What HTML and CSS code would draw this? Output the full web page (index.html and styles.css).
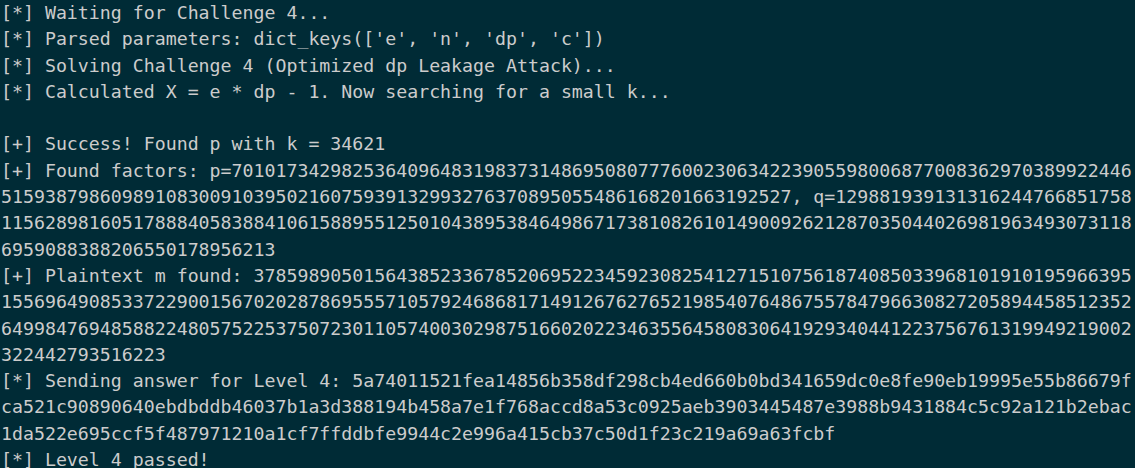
FILE: index.html
```html
<!DOCTYPE html>
<html lang="en">
<head>
<meta charset="utf-8">
<title>Terminal</title>
<link rel="stylesheet" href="styles.css">
</head>
<body>
<main class="terminal">
<div class="line">[*] Waiting for Challenge 4...</div>
<div class="line">[*] Parsed parameters: dict_keys(['e', 'n', 'dp', 'c'])</div>
<div class="line">[*] Solving Challenge 4 (Optimized dp Leakage Attack)...</div>
<div class="line">[*] Calculated X = e * dp - 1. Now searching for a small k...</div>
<div class="line"> </div>
<div class="line">[+] Success! Found p with k = 34621</div>
<div class="line">[+] Found factors: p=7010173429825364096483198373148695080777600230634223905598006877008362970389922446</div>
<div class="line">515938798609891083009103950216075939132993276370895055486168201663192527, q=129881939131316244766851758</div>
<div class="line">1156289816051788840583884106158895512501043895384649867173810826101490092621287035044026981963493073118</div>
<div class="line">6959088388206550178956213</div>
<div class="line">[+] Plaintext m found: 37859890501564385233678520695223459230825412715107561874085033968101910195966395</div>
<div class="line">1556964908533722900156702028786955571057924686817149126762765219854076486755784796630827205894458512352</div>
<div class="line">6499847694858822480575225375072301105740030298751660202234635564580830641929340441223756761319949219002</div>
<div class="line">322442793516223</div>
<div class="line">[*] Sending answer for Level 4: 5a74011521fea14856b358df298cb4ed660b0bd341659dc0e8fe90eb19995e55b86679f</div>
<div class="line">ca521c90890640ebdbddb46037b1a3d388194b458a7e1f768accd8a53c0925aeb3903445487e3988b9431884c5c92a121b2ebac</div>
<div class="line">1da522e695ccf5f487971210a1cf7ffddbfe9944c2e996a415cb37c50d1f23c219a69a63fcbf</div>
<div class="line">[*] Level 4 passed!</div>
</main>
</body>
</html>
```
FILE: styles.css
```css
html, body {
  margin: 0;
  padding: 0;
  background: #002b36;
  height: 100%;
  overflow: hidden;
}

.terminal {
  padding: 0 0 0 1px;
  font-family: "DejaVu Sans Mono", "Liberation Mono", monospace;
  font-size: 18.24px;
  line-height: 26.3px;
  color: #cccccc;
}

.line {
  white-space: pre;
  height: 26.3px;
}
```
